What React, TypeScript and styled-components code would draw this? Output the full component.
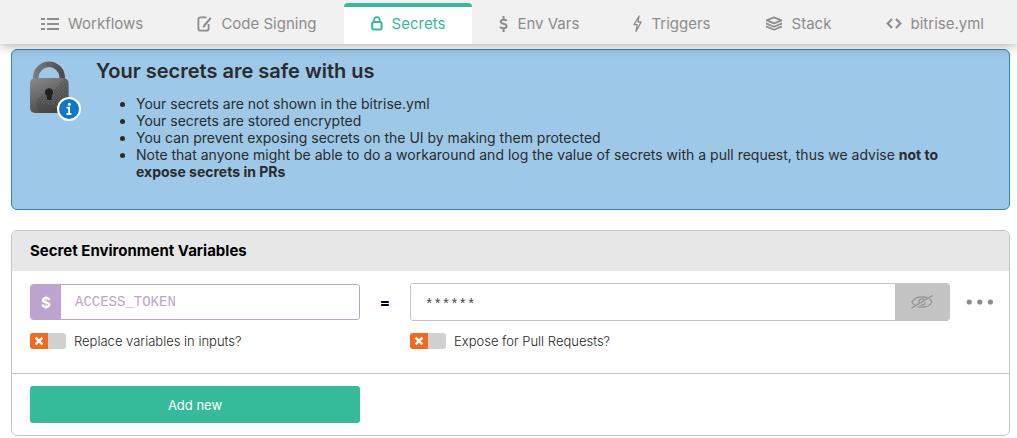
import React from "react";
import styled, { createGlobalStyle } from "styled-components";

const GlobalStyle = createGlobalStyle`
  *, *::before, *::after { box-sizing: border-box; }
  body {
    margin: 0;
    background: #fff;
    color: #1a1a1a;
    font-family: Inter, "Liberation Sans", sans-serif;
    font-size: 14px;
  }
  button, input { font: inherit; }
`;

const TabBar = styled.nav`
  position: relative;
  display: flex;
  align-items: flex-end;
  height: 44px;
  padding: 0 6px 0 14px;
  background: #f1f1f1;
  box-shadow: 0 0 14px rgba(0, 0, 0, 0.4);
  clip-path: inset(0 0 -20px 0);
`;

const Tab = styled.a<{ $active?: boolean }>`
  display: flex;
  flex: 1 1 auto;
  align-items: center;
  justify-content: center;
  gap: 9px;
  height: 41px;
  padding-bottom: 4px;
  border-top: 4px solid ${(p) => (p.$active ? "#35bb9a" : "transparent")};
  border-radius: 4px 4px 0 0;
  background: ${(p) => (p.$active ? "#fff" : "transparent")};
  color: ${(p) => (p.$active ? "#35bb9a" : "#8c8c8c")};
  font-size: 15px;
  line-height: 20px;
  text-decoration: none;
  white-space: nowrap;
`;

const Glyph = styled.svg`
  display: block;
  flex: none;
  fill: none;
  stroke: currentColor;
`;

const Page = styled.main`
  display: flex;
  flex-direction: column;
  gap: 20px;
  padding: 5px 7px 2px 11px;
`;

const Notice = styled.section`
  display: flex;
  gap: 14px;
  min-height: 161px;
  padding: 10px 18px;
  border: 1px solid #2d83c0;
  border-radius: 6px;
  background: #9dc8e8;
  color: #2b2b2b;
`;

const NoticeTitle = styled.h2`
  margin: 0 0 13px;
  font-size: 20px;
  font-weight: 600;
  line-height: 22px;
`;

const NoticeList = styled.ul`
  margin: 0;
  padding: 0 0 0 40px;
  line-height: 17px;
`;

const Panel = styled.section`
  overflow: hidden;
  border: 1px solid #c4c4c4;
  border-radius: 6px;
`;

const PanelTitle = styled.h3`
  margin: 0;
  padding: 10px 18px;
  background: #e7e7e7;
  color: #000;
  font-size: 15px;
  font-weight: 700;
  line-height: 20px;
`;

const Columns = styled.div`
  display: grid;
  grid-template-columns: 330px 50px minmax(0, 1fr) 59px;
  padding: 0 0 0 18px;
`;

const Secret = styled(Columns)`
  align-items: center;
  row-gap: 10px;
  padding-top: 12px;
  padding-bottom: 22px;
`;

const Field = styled.div<{ $tone: string; $height: number }>`
  display: flex;
  height: ${(p) => p.$height}px;
  overflow: hidden;
  border: 1px solid ${(p) => p.$tone};
  border-radius: 3px;
`;

const FieldPrefix = styled.label`
  display: flex;
  flex: none;
  align-items: center;
  justify-content: center;
  width: 30px;
  background: #bba5d0;
  color: #fff;
  font-size: 15px;
  font-weight: 700;
`;

const TextInput = styled.input`
  flex: 1;
  min-width: 0;
  padding: 0 14px;
  border: 0;
  outline: 0;
  background: #fff;
  color: #bba5d0;
  font-family: "Liberation Mono", monospace;
  font-size: 14px;
`;

const ValueInput = styled(TextInput)`
  padding-top: 6px;
  color: #444;
`;

const RevealButton = styled.button`
  display: flex;
  flex: none;
  align-items: center;
  justify-content: center;
  width: 54px;
  padding: 0;
  border: 0;
  background: #c4c4c4;
  color: #929292;
`;

const Equals = styled.span`
  color: #000;
  font-size: 15px;
  font-weight: 800;
  text-align: center;
`;

const MoreButton = styled.button`
  display: flex;
  justify-content: center;
  padding: 0;
  border: 0;
  background: none;
  color: #8c8c8c;
`;

const Option = styled.label`
  display: flex;
  align-items: center;
  gap: 8px;
  color: #1f1f1f;
  font-size: 13px;
  font-weight: 300;
  line-height: 20px;
`;

const OptionPullRequest = styled(Option)`
  grid-column: 3;
`;

const SwitchBox = styled.span`
  display: grid;
  flex: none;
  width: 36px;
  height: 16px;
  overflow: hidden;
  border-radius: 3px;
  background: #d0d0d0;
  color: #fff;

  > * { grid-area: 1 / 1; }
`;

const SwitchInput = styled.input`
  width: 36px;
  height: 16px;
  margin: 0;
  appearance: none;
`;

const SwitchKnob = styled.span`
  display: flex;
  align-items: center;
  justify-content: center;
  width: 18px;
  background: #f06a1f;
  pointer-events: none;
`;

const Footer = styled(Columns)`
  padding-top: 12px;
  padding-bottom: 12px;
  border-top: 1px solid #c4c4c4;
`;

const AddButton = styled.button`
  height: 37px;
  border: 0;
  border-radius: 3px;
  background: #35bb9a;
  color: #fff;
  font-size: 13px;
`;

const ListIcon = () => (
  <Glyph width="18" height="14" viewBox="0 0 18 14" strokeWidth="2">
    <path d="M0 2h4M6 2h12M0 7h4M6 7h12M0 12h4M6 12h12" />
  </Glyph>
);

const EditIcon = () => (
  <Glyph width="15" height="16" viewBox="0 0 15 16" strokeWidth="1.8">
    <path d="M9.5 1.4H3.6Q1.4 1.4 1.4 3.6V12.4Q1.4 14.6 3.6 14.6H9.4Q11.6 14.6 11.6 12.4V8" />
    <path d="M13.8 1.8 7 10" strokeWidth="2" />
    <path d="m6 11.4.5-2.2 1.6 1.3z" fill="currentColor" strokeWidth=".6" />
  </Glyph>
);

const PadlockIcon = () => (
  <Glyph width="12" height="16" viewBox="0 0 12 16" strokeWidth="2">
    <rect x="1.2" y="6" width="9.4" height="7.4" rx="1.5" />
    <path d="M3.1 6V4Q3.1 1.2 5.9 1.2T8.7 4V6" strokeWidth="1.8" />
  </Glyph>
);

const DollarIcon = () => (
  <Glyph width="9" height="16" viewBox="0 0 9 16" strokeWidth="2">
    <path d="M7.8 4.8Q6.5 3.7 4.7 3.7 1.8 3.7 1.8 5.6 1.8 7.3 4.4 7.8 7.6 8.3 7.6 10.3 7.6 12.3 4.6 12.3 2.4 12.3.9 11M4.6 0V4M4.6 12V16" />
  </Glyph>
);

const BoltIcon = () => (
  <Glyph width="9" height="18" viewBox="0 0 9 18" strokeWidth="1.3" strokeLinejoin="round">
    <path d="M6.1 1 1 9.6H4.2L3 16.4 8.2 7H5z" />
  </Glyph>
);

const LayersIcon = () => (
  <Glyph width="18" height="15" viewBox="0 0 18 15" strokeWidth="1.7" strokeLinejoin="round">
    <path d="m9 1.4 7.3 3L9 7.4l-7.3-3z" />
    <path d="m1 7.4 8 3.3 8-3.3M1 10.4l8 3.3 8-3.3" />
  </Glyph>
);

const CodeIcon = () => (
  <Glyph width="16" height="11" viewBox="0 0 16 11" strokeWidth="2.1">
    <path d="M6 1 1.6 5.5 6 10M10 1l4.4 4.5L10 10" />
  </Glyph>
);

const EyeOffIcon = () => (
  <Glyph width="22" height="14" viewBox="0 0 22 14" strokeWidth="1.2">
    <path d="M.8 7Q4.2 1.8 11 1.8T21.2 7Q17.8 12.2 11 12.2T.8 7z" />
    <circle cx="11" cy="7" r="3.1" />
    <path d="M1.5 14 21.5 1.2" stroke="#c4c4c4" strokeWidth="2" />
    <path d="M.5 13.2 21.6.6" />
  </Glyph>
);

const DotsIcon = () => (
  <Glyph width="28" height="6" viewBox="0 0 28 6">
    <g fill="currentColor" stroke="none">
      <circle cx="3.2" cy="3" r="2.6" />
      <circle cx="13.8" cy="3" r="2.6" />
      <circle cx="24.4" cy="3" r="2.6" />
    </g>
  </Glyph>
);

const LockBadge = () => (
  <Glyph width="52" height="62" viewBox="0 0 52 62">
    <defs>
      <linearGradient id="body" x1="0" y1="0" x2="0.5" y2="1">
        <stop offset="0" stopColor="#8b8b8b" />
        <stop offset="1" stopColor="#474747" />
      </linearGradient>
      <linearGradient id="shackle" x1="0" y1="0" x2="1" y2="0">
        <stop offset="0" stopColor="#797979" />
        <stop offset="1" stopColor="#4b4b4b" />
      </linearGradient>
      <pattern id="grain" width="5" height="4" patternUnits="userSpaceOnUse">
        <path d="M0 .5h1M3 .5h1M2 1.5h1M4 2.5h1M1 2.5h1M3 3.5h1" stroke="#8f8f8f" strokeWidth=".7" opacity=".5" />
      </pattern>
    </defs>
    <path d="M5.8 20V17.5A13.2 13.2 0 0 1 32.2 17.5V20" stroke="url(#shackle)" strokeWidth="5.6" />
    <rect x="0" y="18" width="38.5" height="35" rx="5" fill="url(#body)" stroke="none" />
    <path d="M33 18.2Q38.5 19 38.5 24V48Q38.5 53 33 53H10Q5 48 7 40 16 31 24 29 30 26 33 18.2z" fill="#444" opacity=".4" stroke="none" />
    <path d="M33 18.2Q38.5 19 38.5 24V48Q38.5 50 36 50L7 42Q16 31 24 29 30 26 33 18.2z" fill="url(#grain)" stroke="none" />
    <path d="M15 32.5a4 4 0 1 1 6.6 2.8V39q0 1-1 1h-2.6q-1 0-1-1v-3.5q-2-1.2-2-3z" fill="#202020" stroke="none" />
    <circle cx="39" cy="49" r="12" fill="#fff" stroke="none" />
    <circle cx="39" cy="49" r="10" fill="#0d77ca" stroke="none" />
    <circle cx="39.4" cy="44.2" r="1.5" fill="#fff" stroke="none" />
    <path d="M36.6 47.7h2.5V54M36.4 54h5" stroke="#fff" strokeWidth="1.8" />
  </Glyph>
);

const CrossIcon = () => (
  <Glyph width="8" height="8" viewBox="0 0 8 8" strokeWidth="2.4">
    <path d="m.6.6 6.8 6.8M7.4.6.6 7.4" />
  </Glyph>
);

const tabs = [
  { label: "Workflows", Icon: ListIcon },
  { label: "Code Signing", Icon: EditIcon },
  { label: "Secrets", Icon: PadlockIcon, active: true },
  { label: "Env Vars", Icon: DollarIcon },
  { label: "Triggers", Icon: BoltIcon },
  { label: "Stack", Icon: LayersIcon },
  { label: "bitrise.yml", Icon: CodeIcon },
];

const Switch = ({ id }: { id: string }) => (
  <SwitchBox>
    <SwitchInput id={id} type="checkbox" />
    <SwitchKnob>
      <CrossIcon />
    </SwitchKnob>
  </SwitchBox>
);

export default function App() {
  return (
    <>
      <GlobalStyle />
      <TabBar>
        {tabs.map(({ label, Icon, active }) => (
          <Tab key={label} href="#" $active={active} aria-current={active ? "page" : undefined}>
            <Icon />
            {label}
          </Tab>
        ))}
      </TabBar>
      <Page>
        <Notice>
          <LockBadge />
          <div>
            <NoticeTitle>Your secrets are safe with us</NoticeTitle>
            <NoticeList>
              <li>Your secrets are not shown in the bitrise.yml</li>
              <li>Your secrets are stored encrypted</li>
              <li>You can prevent exposing secrets on the UI by making them protected</li>
              <li>
                Note that anyone might be able to do a workaround and log the value of secrets with a
                pull request, thus we advise <strong>not to expose secrets in PRs</strong>
              </li>
            </NoticeList>
          </div>
        </Notice>
        <Panel>
          <PanelTitle>Secret Environment Variables</PanelTitle>
          <Secret>
            <Field $tone="#bba5d0" $height={36}>
              <FieldPrefix htmlFor="secret-key">$</FieldPrefix>
              <TextInput id="secret-key" defaultValue="ACCESS_TOKEN" />
            </Field>
            <Equals>=</Equals>
            <Field $tone="#c4c4c4" $height={38}>
              <ValueInput aria-label="Secret value" defaultValue="******" />
              <RevealButton type="button" aria-label="Show value">
                <EyeOffIcon />
              </RevealButton>
            </Field>
            <MoreButton type="button" aria-label="More options">
              <DotsIcon />
            </MoreButton>
            <Option htmlFor="replace-variables">
              <Switch id="replace-variables" />
              Replace variables in inputs?
            </Option>
            <OptionPullRequest htmlFor="expose-secret">
              <Switch id="expose-secret" />
              Expose for Pull Requests?
            </OptionPullRequest>
          </Secret>
          <Footer>
            <AddButton type="button">Add new</AddButton>
          </Footer>
        </Panel>
      </Page>
    </>
  );
}
